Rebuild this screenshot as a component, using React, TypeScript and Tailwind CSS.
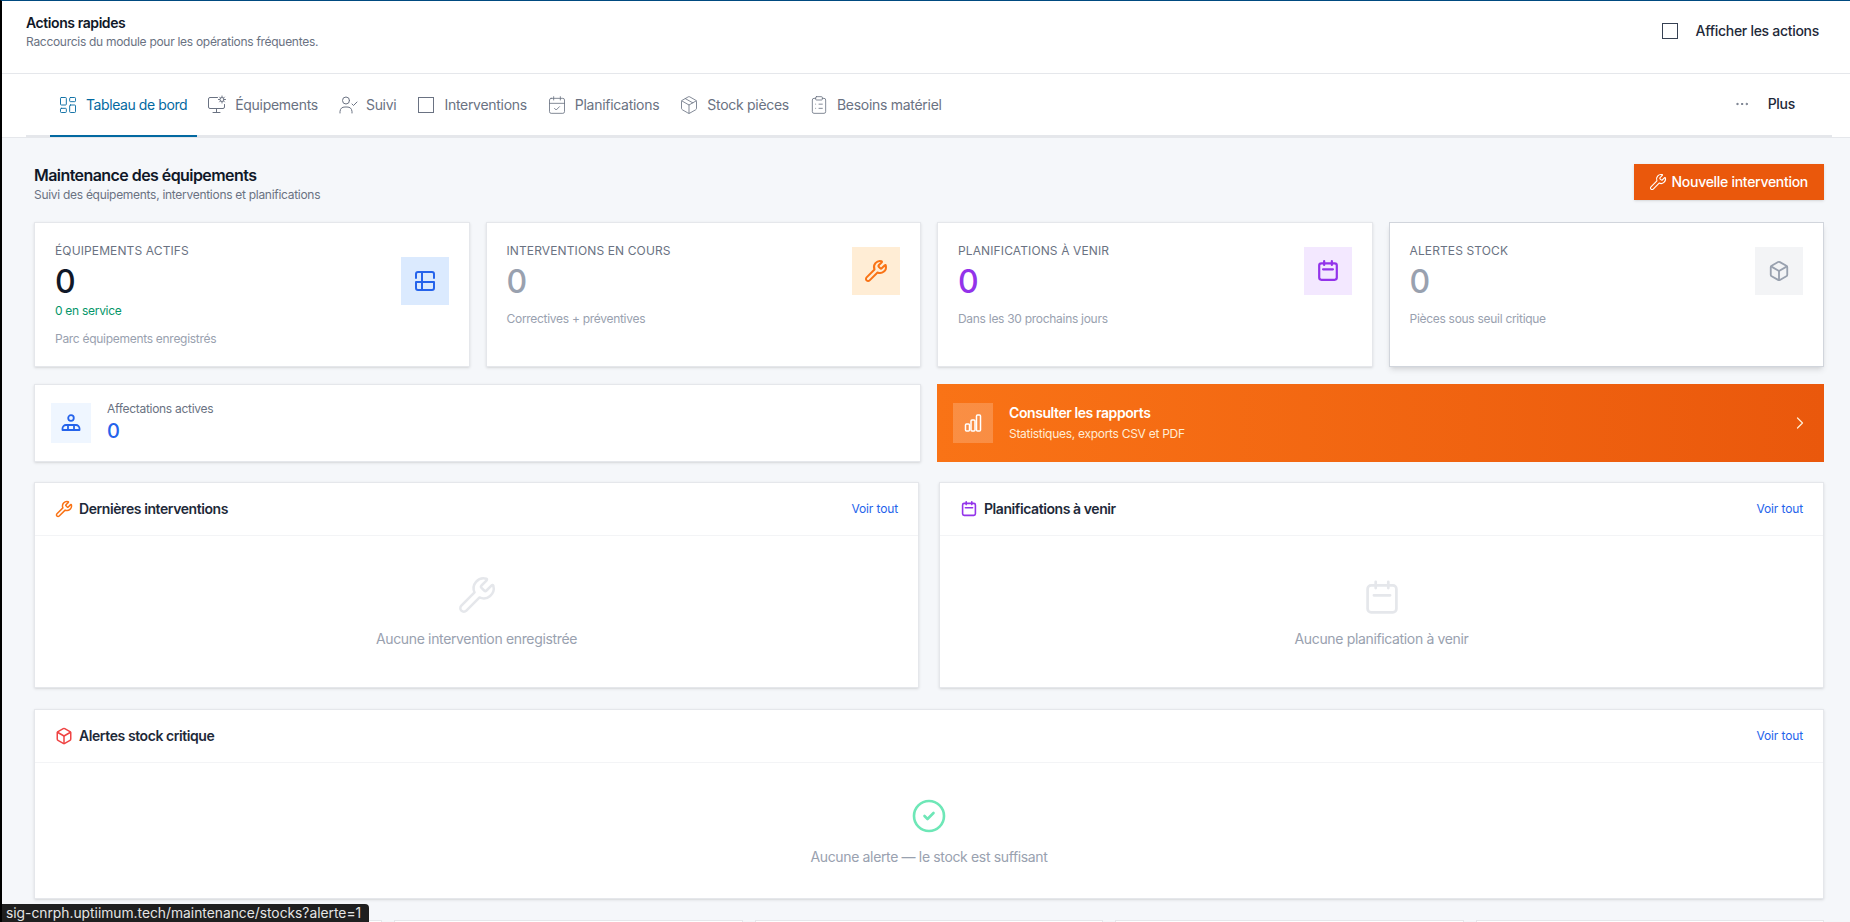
import { Box, CalendarCheck, ChevronRight, CircleCheck, ClipboardList, Ellipsis, LayoutDashboard, Package, Wrench } from "lucide-react";
import type { ReactNode } from "react";

const MonitorGear = () => (
  <svg viewBox="0 0 20 20" className="h-5 w-5" fill="none" stroke="currentColor" strokeWidth="1" strokeLinecap="round">
    <path d="M10.5 2.5H3a1.5 1.5 0 0 0-1.5 1.5v8A1.5 1.5 0 0 0 3 13.5h13a1.5 1.5 0 0 0 1.5-1.5V9.5" />
    <path d="M9.5 13.5v4M6 17.5h7" />
    <circle cx="15" cy="4.5" r="2" />
    <path d="M15 1v1M15 7v1M11.5 4.5h1M17.5 4.5h1M12.6 2.1l.6.6M16.8 6.3l.6.6M12.6 6.9l.6-.6M16.8 2.7l.6-.6" />
  </svg>
);

const UserTick = () => (
  <svg viewBox="0 0 20 20" className="h-5 w-5" fill="none" stroke="currentColor" strokeWidth="1" strokeLinecap="round" strokeLinejoin="round">
    <circle cx="8" cy="5.5" r="3.5" />
    <path d="M2 18v-1.5a5 5 0 0 1 5-4.5h2a5 5 0 0 1 5 4.5V18" />
    <path d="m14 9 1.5 1.5L19 7" />
  </svg>
);

const PanelIcon = () => (
  <svg viewBox="0 0 20 20" className="h-5 w-5" fill="none" stroke="currentColor" strokeWidth="2" strokeLinecap="round" strokeLinejoin="round">
    <path d="M1 7V3a2 2 0 0 1 2-2h14a2 2 0 0 1 2 2v4" />
    <path d="M7 1v18" />
    <path d="M1 11h18v6a2 2 0 0 1-2 2H3a2 2 0 0 1-2-2z" />
  </svg>
);

const Agenda = ({ className, width = 2 }: { className: string; width?: number }) => (
  <svg viewBox="0 0 20 20" className={className} fill="none" stroke="currentColor" strokeWidth={width} strokeLinecap="round" strokeLinejoin="round">
    <rect x="2" y="3" width="16" height="15" rx="2" />
    <path d="M6.5 1v3.5M13.5 1v3.5M5.5 8.5h9" />
  </svg>
);

const PersonGroup = () => (
  <svg viewBox="0 0 20 20" className="h-5 w-5 text-[#2563eb]" fill="none" stroke="currentColor" strokeWidth="1.8" strokeLinecap="round" strokeLinejoin="round">
    <circle cx="10" cy="5" r="2.800" />
    <path d="M1.500 17v-1.500a3.500 3.500 0 0 1 3.500-3.500h10a3.500 3.500 0 0 1 3.500 3.500V17z" />
    <path d="M7 12v5M13 12v5" />
  </svg>
);

const Bars = () => (
  <svg viewBox="0 0 20 20" className="h-5 w-5 text-white" fill="none" stroke="currentColor" strokeWidth="1.500" strokeLinejoin="round">
    <rect x="2.500" y="11" width="4" height="7" rx="1" />
    <rect x="8" y="7" width="4" height="11" rx="1" />
    <rect x="13.500" y="2" width="4" height="16" rx="1" />
  </svg>
);

const navItems: { label: string; icon: ReactNode; active?: boolean }[] = [
  { label: "Tableau de bord", icon: <LayoutDashboard className="h-5 w-5" strokeWidth={1.1} />, active: true },
  { label: "Équipements", icon: <MonitorGear /> },
  { label: "Suivi", icon: <UserTick /> },
  { label: "Interventions", icon: <span className="flex h-5 w-5 items-center justify-center"><span className="block h-4 w-4 border border-gray-500" /></span> },
  { label: "Planifications", icon: <CalendarCheck className="h-5 w-5" strokeWidth={1} /> },
  { label: "Stock pièces", icon: <Package className="h-5 w-5" strokeWidth={1} /> },
  { label: "Besoins matériel", icon: <ClipboardList className="h-5 w-5" strokeWidth={1} /> },
];

const StatCard = ({
  label, value, valueColor, note, sub, icon, iconBg, iconOffset, hovered,
}: {
  label: string; value: string; valueColor: string; note?: string; sub: string; icon: ReactNode; iconBg: string; iconOffset: string; hovered?: boolean;
}) => (
  <div className={`flex h-[145px] items-start justify-between border bg-white px-5 pt-5 ${hovered ? "border-gray-300 shadow-md" : "border-gray-200 shadow-sm"}`}>
    <div>
      <div className="text-xs leading-4 tracking-[0.01em] text-gray-500 uppercase">{label}</div>
      <div className={`mt-[5px] text-[32px] leading-9 font-medium ${valueColor}`}>{value}</div>
      {note && <div className="mt-[2px] text-xs leading-[18px] text-[#059669]">{note}</div>}
      <div className="mt-[11px] text-xs leading-4 text-gray-400">{sub}</div>
    </div>
    <div className={`flex h-12 w-12 items-center justify-center ${iconBg} ${iconOffset}`}>{icon}</div>
  </div>
);

const Panel = ({
  title, icon, height, children,
}: {
  title: string; icon: ReactNode; height: string; children: ReactNode;
}) => (
  <section className={`flex flex-col border border-gray-200 bg-white shadow-sm ${height}`}>
    <div className="flex h-[53px] shrink-0 items-center justify-between border-b border-gray-100 px-5">
      <div className="flex items-center gap-[6px]">
        {icon}
        <h2 className="text-sm font-semibold tracking-[-0.03em] text-gray-800">{title}</h2>
      </div>
      <a className="text-xs tracking-[-0.01em] text-[#2563eb]">Voir tout</a>
    </div>
    {children}
  </section>
);

export default function App() {
  return (
    <div className="relative h-[922px] overflow-hidden border-t border-l-2 border-t-[#004a80] border-l-black bg-[#f5f7fa] font-['Inter',sans-serif] tracking-[-0.018em]">
      <div className="flex h-[73px] items-start justify-between border-b border-gray-200 bg-white pr-[31px] pl-6">
        <div className="pt-[13px]">
          <div className="text-sm leading-[18px] font-semibold tracking-[-0.03em] text-gray-900">Actions rapides</div>
          <div className="mt-[2px] text-xs leading-4 tracking-[-0.024em] text-gray-500">Raccourcis du module pour les opérations fréquentes.</div>
        </div>
        <label className="mt-[22px] flex items-center gap-[18px] text-sm leading-4 font-medium text-gray-800">
          <span className="block h-4 w-4 border-[1.5px] border-gray-700" />
          Afficher les actions
        </label>
      </div>

      <nav className="bg-white">
        <div className="mr-[18px] ml-6 flex h-[63px] items-end justify-between border-b-2 border-gray-200 pr-[37px] pl-6">
          <ul className="-mb-[2px] flex gap-[2px]">
            {navItems.map((item) => (
              <li
                key={item.label}
                className={`flex h-[53px] items-center gap-2 pr-[10px] pb-[10px] pl-2 text-sm ${item.active ? "border-b-2 border-[#0369a1] tracking-[-0.03em] text-[#0369a1]" : "border-b-2 border-transparent text-gray-500"}`}
              >
                {item.icon}
                {item.label}
              </li>
            ))}
          </ul>
          <div className="mb-[21px] flex items-center gap-[18px] text-sm font-medium text-gray-800">
            <Ellipsis className="h-4 w-4 text-gray-500" strokeWidth={1.5} />
            Plus
          </div>
        </div>
      </nav>

      <main className="border-t border-gray-200 pt-[26px] pr-[26px] pl-[32px]">
        <div className="flex items-start justify-between">
          <div>
            <h1 className="text-base leading-[22px] font-semibold tracking-[-0.035em] text-gray-900">Maintenance des équipements</h1>
            <p className="mt-[1px] text-xs leading-4 text-gray-500">Suivi des équipements, interventions et planifications</p>
          </div>
          <button className="flex h-9 items-center gap-[5px] bg-[#ea580c] pr-4 pl-[15px] text-sm font-medium text-white shadow-sm">
            <Wrench className="h-[18px] w-[18px]" strokeWidth={1.5} />
            Nouvelle intervention
          </button>
        </div>

        <div className="mt-[19px] grid grid-cols-4 gap-4">
          <StatCard label="Équipements actifs" value="0" valueColor="text-gray-900" note="0 en service" sub="Parc équipements enregistrés" iconBg="bg-[#dbeafe]" iconOffset="mt-[14px]" icon={<span className="text-[#2563eb]"><PanelIcon /></span>} />
          <StatCard label="Interventions en cours" value="0" valueColor="text-gray-400" sub="Correctives + préventives" iconBg="bg-[#ffedd5]" iconOffset="mt-1" icon={<Wrench className="h-6 w-6 text-[#f97316]" strokeWidth={2} />} />
          <StatCard label="Planifications à venir" value="0" valueColor="text-[#9333ea]" sub="Dans les 30 prochains jours" iconBg="bg-[#f3e8ff]" iconOffset="mt-1" icon={<span className="text-[#9333ea]"><Agenda className="h-[22px] w-[22px]" /></span>} />
          <StatCard label="Alertes stock" value="0" valueColor="text-gray-400" sub="Pièces sous seuil critique" iconBg="bg-gray-100" iconOffset="mt-1" hovered icon={<Box className="h-[22px] w-[22px] text-gray-400" strokeWidth={2} />} />
        </div>

        <div className="mt-[17px] grid grid-cols-2 gap-4">
          <div className="flex h-[78px] items-center gap-4 border border-gray-200 bg-white px-4 shadow-sm">
            <div className="flex h-10 w-10 items-center justify-center bg-[#eff6ff]"><PersonGroup /></div>
            <div>
              <div className="text-xs leading-4 text-gray-500">Affectations actives</div>
              <div className="text-xl leading-7 font-medium text-[#2563eb]">0</div>
            </div>
          </div>
          <div className="flex h-[78px] items-center justify-between bg-gradient-to-r from-[#f97316] to-[#ea580c] pr-[14px] pl-4">
            <div className="flex items-center gap-4">
              <div className="flex h-10 w-10 items-center justify-center bg-white/20"><Bars /></div>
              <div>
                <div className="text-sm leading-[22px] font-semibold tracking-[-0.03em] text-white">Consulter les rapports</div>
                <div className="text-xs leading-5 text-[#ffedd5]">Statistiques, exports CSV et PDF</div>
              </div>
            </div>
            <ChevronRight className="h-5 w-5 text-[#ffedd5]" strokeWidth={1.5} />
          </div>
        </div>

        <div className="mt-5 grid grid-cols-2 gap-5">
          <Panel title="Dernières interventions" height="h-[206px]" icon={<Wrench className="h-[18px] w-[18px] text-[#f97316]" strokeWidth={2} />}>
            <div className="flex flex-1 flex-col items-center pt-[39px] text-sm tracking-[-0.025em] text-gray-400">
              <Wrench className="h-10 w-10 text-gray-200" strokeWidth={1.5} />
              <p className="mt-[14px]">Aucune intervention enregistrée</p>
            </div>
          </Panel>
          <Panel title="Planifications à venir" height="h-[206px]" icon={<span className="flex w-[18px] justify-center text-[#9333ea]"><Agenda className="h-4 w-4" /></span>}>
            <div className="flex flex-1 flex-col items-center pt-[44px] text-sm tracking-[-0.025em] text-gray-400">
              <span className="text-gray-200"><Agenda className="block h-9 w-9" width={1.5} /></span>
              <p className="mt-[13px]">Aucune planification à venir</p>
            </div>
          </Panel>
        </div>

        <div className="mt-[21px]">
          <Panel title="Alertes stock critique" height="h-[190px]" icon={<Box className="h-[18px] w-[18px] text-[#ef4444]" strokeWidth={2} />}>
            <div className="flex flex-1 flex-col items-center pt-[35px] text-sm tracking-[-0.025em] text-gray-400">
              <CircleCheck className="h-9 w-9 text-[#6ee7b7]" strokeWidth={1.75} />
              <p className="mt-[13px]">Aucune alerte — le stock est suffisant</p>
            </div>
          </Panel>
        </div>

        <div className="mt-[21px] grid grid-cols-5 gap-3">
          {[0, 1, 2, 3, 4].map((i) => (
            <div key={i} className="h-24 border border-gray-200 bg-white" />
          ))}
        </div>
      </main>

      <div className="absolute bottom-0 -left-[2px] h-[18px] w-[369px] overflow-hidden rounded-tr-[4px] bg-[#1f1f1f] pl-[6px] text-[13.8px] leading-[18px] tracking-normal text-[#e5e5e5]">
        sig-cnrph.uptiimum.tech/maintenance/stocks?alerte=1
      </div>
    </div>
  );
}
